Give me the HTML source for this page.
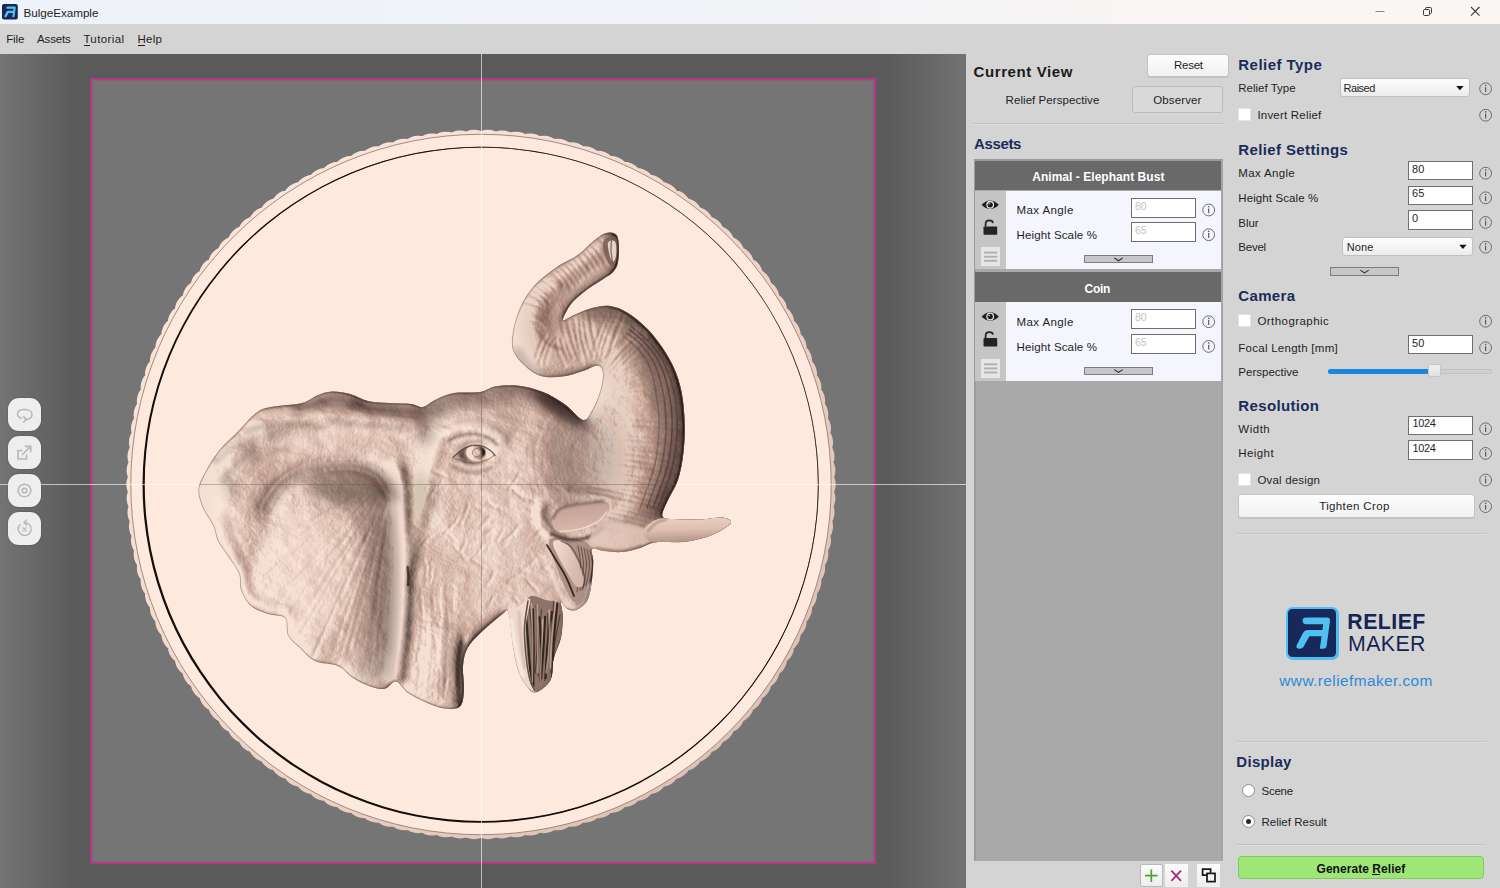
<!DOCTYPE html>
<html lang="en"><head><meta charset="utf-8"><title>BulgeExample</title>
<style>
html,body{margin:0;padding:0;background:#d4d4d4;}
#app{position:relative;width:1500px;height:888px;overflow:hidden;background:#d4d4d4;font-family:"Liberation Sans",sans-serif;}
.t{position:absolute;white-space:pre;line-height:1;color:#1f1f1f;}
.b{position:absolute;box-sizing:border-box;}
u{text-decoration:underline;text-decoration-thickness:1px;text-underline-offset:1.5px;}
svg{position:absolute;overflow:visible;}
#titlebar{left:0;top:0;width:1500px;height:24px;background:linear-gradient(90deg,#eef2f9 0%,#f1f3f8 45%,#f8f5f4 75%,#faf6f3 100%);}
#viewport{left:0;top:54px;width:966px;height:834px;overflow:hidden;background:linear-gradient(90deg,#747474 0px,#5a5a5a 76px,#5a5a5a 886px,#727272 966px);}
#frame{left:90px;top:24px;width:786px;height:786px;background:#757575;border:2px solid #b03a86;box-shadow:inset 0 0 0 1px rgba(176,58,134,.3);}
.vbtn{left:8px;width:33px;height:33px;border-radius:11px;background:#efeeef;box-shadow:0 0 2px rgba(0,0,0,.25);}
.btn{border:1px solid #c3c3c3;border-radius:3px;background:linear-gradient(#fdfdfd,#f1f1f1);box-shadow:0 1px 0 rgba(0,0,0,.08);}
.btn2{border:1px solid #bcbcbc;border-radius:3px;background:#d9d9d9;}
.sep{height:1px;background:#c3c3c3;box-shadow:0 1px 0 #dcdcdc;}
.inp{background:#fff;border:1px solid #6f6f6f;}
.combo{border:1px solid #c0c0c0;border-radius:3px;background:linear-gradient(#fefefe,#ececec);}
.chk{width:13px;height:13px;background:#fff;border:1px solid #e3e3e3;}
.exp{background:#c7c7c7;border:1px solid #7d7d7d;}
.ahead{left:975px;width:246.2px;height:29.7px;background:#696969;}
.abody{left:975px;width:246.2px;height:78.8px;background:#f5f5fd;}
.acol{left:975px;width:30.7px;height:78.8px;background:#c5c5c5;}
.hamb{left:981.3px;width:18.6px;height:18.6px;background:#e6e6e6;}
.radio{width:13px;height:13px;border-radius:50%;background:#fff;border:1px solid #8d8d8d;}
.sbtn{width:23px;height:23px;background:linear-gradient(#fbfbfb,#ededed);}

</style></head>
<body>
<div id="app">
<div class="b" id="viewport">
 <div class="b" id="frame"></div>
 <svg width="966" height="834" viewBox="0 54 966 834" style="left:0;top:0">
<defs>
<path id="esil" d="M256.0 413.0C261.5 408.9 263.3 408.7 271.0 407.0C278.7 405.3 294.3 404.9 302.0 403.0C309.7 401.1 312.0 397.4 317.0 395.5C322.0 393.6 326.5 391.9 332.0 391.6C337.5 391.4 344.0 392.4 350.0 394.0C356.0 395.6 361.3 399.5 368.0 401.0C374.7 402.5 382.8 402.5 390.0 403.0C397.2 403.5 405.5 403.3 411.0 404.0C416.5 404.7 419.0 407.7 423.0 407.0C427.0 406.3 429.8 402.3 435.0 400.0C440.2 397.7 446.5 394.3 454.0 393.0C461.5 391.7 473.2 393.1 480.0 392.0C486.8 390.9 488.5 387.6 495.0 386.5C501.5 385.4 511.0 384.8 519.0 385.7C527.0 386.6 535.3 388.9 543.0 392.0C550.7 395.1 558.3 399.8 565.0 404.5C571.7 409.2 578.5 419.0 583.0 420.0C587.5 421.0 589.2 415.3 592.0 410.6C594.8 405.9 598.2 398.1 600.0 392.0C601.8 385.9 603.3 378.4 603.0 374.0C602.7 369.6 601.3 366.0 598.0 365.5C594.7 365.0 589.0 369.1 583.0 371.0C577.0 372.9 569.2 375.8 562.0 376.6C554.8 377.4 546.3 377.6 540.0 375.7C533.7 373.8 528.5 369.3 524.0 365.0C519.5 360.7 514.8 355.6 513.0 350.0C511.2 344.4 511.8 338.8 513.0 331.6C514.2 324.4 517.0 314.6 520.5 307.0C524.0 299.4 528.2 292.5 534.0 286.0C539.8 279.5 548.3 273.1 555.5 268.0C562.7 262.9 571.2 259.6 577.0 255.6C582.8 251.6 586.5 247.0 590.0 244.0C593.5 241.0 595.6 239.2 598.0 237.5C600.4 235.8 602.3 234.4 604.5 233.6C606.7 232.8 609.0 232.4 611.0 232.6C613.0 232.8 615.2 233.4 616.5 235.0C617.8 236.6 618.2 238.7 618.6 242.0C619.0 245.3 619.1 251.0 618.8 255.0C618.5 259.0 618.2 262.9 617.0 266.0C615.8 269.1 613.7 271.4 611.5 273.5C609.3 275.6 608.2 275.7 604.0 278.5C599.8 281.3 591.5 286.2 586.0 290.5C580.5 294.8 574.8 299.1 571.0 304.0C567.2 308.9 562.5 318.2 563.0 320.0C563.5 321.8 569.2 317.0 574.0 315.0C578.8 313.0 586.0 309.5 592.0 308.0C598.0 306.5 604.0 305.2 610.0 306.0C616.0 306.8 621.8 309.2 628.0 313.0C634.2 316.8 641.3 322.8 647.0 328.5C652.7 334.2 657.5 340.4 662.0 347.0C666.5 353.6 670.7 360.5 674.0 368.0C677.3 375.5 679.8 382.8 681.6 392.0C683.4 401.2 684.4 412.8 684.7 423.0C685.0 433.2 684.5 443.5 683.4 453.0C682.3 462.5 680.6 472.2 678.0 480.0C675.4 487.8 670.6 493.9 668.0 500.0C665.4 506.1 661.0 513.3 662.5 516.5C664.0 519.7 670.6 518.7 677.0 519.2C683.4 519.7 693.5 519.7 701.0 519.4C708.5 519.1 717.0 517.1 722.0 517.5C727.0 517.9 730.5 519.8 731.0 521.5C731.5 523.2 729.0 525.4 725.0 528.0C721.0 530.6 714.0 534.7 707.0 537.0C700.0 539.3 691.7 541.1 683.0 542.0C674.3 542.9 662.2 541.5 655.0 542.5C647.8 543.5 645.5 546.4 640.0 548.0C634.5 549.6 628.0 551.5 622.0 552.0C616.0 552.5 609.0 551.5 604.0 551.0C599.0 550.5 593.8 547.2 592.0 549.0C590.2 550.8 593.4 555.9 593.3 561.6C593.2 567.3 592.6 576.4 591.6 583.0C590.6 589.6 589.6 596.5 587.0 601.0C584.4 605.5 579.3 608.7 576.0 610.0C572.7 611.3 569.5 610.0 567.0 608.7C564.5 607.4 561.7 600.8 561.0 602.0C560.3 603.2 562.7 610.1 562.7 616.0C562.7 621.9 562.5 630.4 561.0 637.6C559.5 644.8 555.4 651.9 553.6 659.0C551.9 666.1 553.5 674.4 550.5 680.0C547.5 685.6 539.8 691.8 535.5 692.5C531.2 693.2 528.0 687.9 525.0 684.0C522.0 680.1 519.5 675.2 517.5 669.0C515.5 662.8 514.5 656.0 513.0 646.7C511.5 637.4 510.3 618.4 508.5 613.0C506.7 607.6 506.6 611.2 502.0 614.5C497.4 617.8 486.8 626.9 481.0 632.5C475.2 638.1 470.5 642.4 467.5 648.0C464.5 653.6 463.6 659.0 463.0 666.0C462.4 673.0 464.5 683.2 464.0 690.0C463.5 696.8 463.2 703.4 460.0 706.5C456.8 709.6 450.2 709.1 444.5 708.4C438.8 707.7 432.1 705.0 426.0 702.4C419.9 699.8 413.0 696.5 408.0 693.0C403.0 689.5 399.8 682.2 396.0 681.5C392.2 680.8 389.1 687.8 385.0 688.7C380.9 689.6 376.9 688.8 371.6 687.0C366.3 685.2 358.6 681.5 353.0 678.0C347.4 674.5 344.3 668.8 338.0 666.0C331.7 663.2 321.3 664.0 315.0 661.0C308.7 658.0 304.5 652.2 300.0 648.0C295.5 643.8 290.5 640.5 288.0 635.5C285.5 630.5 288.3 621.6 285.0 618.0C281.7 614.4 273.7 616.0 268.0 614.0C262.3 612.0 255.5 610.0 251.0 606.0C246.5 602.0 242.9 595.2 241.0 590.0C239.1 584.8 241.1 579.6 239.3 574.5C237.5 569.4 233.8 564.9 230.2 559.3C226.6 553.7 220.8 546.5 218.0 541.0C215.2 535.5 215.9 531.5 213.4 526.0C210.9 520.5 205.3 513.8 202.8 507.7C200.3 501.6 197.9 495.5 198.4 489.4C198.9 483.3 202.3 477.8 205.8 471.2C209.3 464.6 214.2 456.6 219.5 450.0C224.8 443.4 231.7 437.9 237.8 431.7C243.9 425.5 250.5 417.1 256.0 413.0Z"/>
<clipPath id="eclip"><use href="#esil"/></clipPath>
<linearGradient id="bandg" x1="0.15" y1="0.15" x2="0.85" y2="0.85"><stop offset="0" stop-color="#fae4d8"/><stop offset=".5" stop-color="#f0d6c9"/><stop offset="1" stop-color="#dfc2b5"/></linearGradient>
</defs>
<circle cx="481" cy="484.5" r="335.7" fill="none" stroke="url(#bandg)" stroke-width="38" stroke-linecap="round" pathLength="150" stroke-dasharray="0 1"/>
<circle cx="481" cy="484.5" r="352.2" fill="url(#bandg)"/>
<circle cx="481" cy="484.5" r="350.2" fill="#fde9de" stroke="#8d7468" stroke-opacity=".8" stroke-width="1"/>
<circle cx="481" cy="484.5" r="337.3" fill="none" stroke="#7d675e" stroke-width=".9"/>
<path d="M142.55 484.82A338.0 338.0 0 1 1 818.55 484.82A338.0 338.0 0 1 1 142.55 484.82ZM144.72 484.28A336.6 336.6 0 1 0 817.92 484.28A336.6 336.6 0 1 0 144.72 484.28Z" fill="#120e0c"/>
<path d="M481.5 54V888M0 484.5H966" fill="none" stroke="#fff" stroke-opacity=".62" stroke-width="1"/>
<defs>
<filter id="bl0_7" x="150" y="200" width="620" height="540" filterUnits="userSpaceOnUse"><feGaussianBlur stdDeviation="0.7"/></filter>
<filter id="bl1_2" x="150" y="200" width="620" height="540" filterUnits="userSpaceOnUse"><feGaussianBlur stdDeviation="1.2"/></filter>
<filter id="bl2" x="150" y="200" width="620" height="540" filterUnits="userSpaceOnUse"><feGaussianBlur stdDeviation="2"/></filter>
<filter id="bl3" x="150" y="200" width="620" height="540" filterUnits="userSpaceOnUse"><feGaussianBlur stdDeviation="3"/></filter>
<filter id="bl4" x="150" y="200" width="620" height="540" filterUnits="userSpaceOnUse"><feGaussianBlur stdDeviation="4"/></filter>
<filter id="bl6" x="150" y="200" width="620" height="540" filterUnits="userSpaceOnUse"><feGaussianBlur stdDeviation="6"/></filter>
<filter id="bl9" x="150" y="200" width="620" height="540" filterUnits="userSpaceOnUse"><feGaussianBlur stdDeviation="9"/></filter>
<filter id="bl13" x="150" y="200" width="620" height="540" filterUnits="userSpaceOnUse"><feGaussianBlur stdDeviation="13"/></filter>
<filter id="relief" x="150" y="200" width="620" height="540" filterUnits="userSpaceOnUse" color-interpolation-filters="sRGB">
 <feColorMatrix in="SourceGraphic" type="matrix" values="0 0 0 0 0  0 0 0 0 0  0 0 0 0 0  1 0 0 0 0" result="h0"/>
 <feGaussianBlur in="h0" stdDeviation="0.9" result="h"/>
 <feTurbulence type="fractalNoise" baseFrequency="0.075 0.11" numOctaves="4" seed="11" result="nz"/>
 <feColorMatrix in="nz" type="matrix" values="0 0 0 0 0  0 0 0 0 0  0 0 0 0 0  1 0 0 0 -0.3" result="nza"/>
 <feComposite in="h" in2="nza" operator="arithmetic" k1="0.06" k2="1" k3="0" k4="0" result="hn1"/>
 <feTurbulence type="fractalNoise" baseFrequency="0.016 0.02" numOctaves="3" seed="3" result="nzc"/>
 <feColorMatrix in="nzc" type="matrix" values="0 0 0 0 0  0 0 0 0 0  0 0 0 0 0  1.6 0 0 0 -0.35" result="nzca"/>
 <feComposite in="hn1" in2="nzca" operator="arithmetic" k1="0.13" k2="1" k3="0" k4="0" result="hn"/>
 <feDiffuseLighting in="hn" surfaceScale="17" diffuseConstant="1.15" lighting-color="#ffffff" result="lit0">
  <feDistantLight azimuth="170" elevation="50"/>
 </feDiffuseLighting>
 <feComponentTransfer in="lit0" result="lit">
  <feFuncR type="table" tableValues="0.16 0.34 0.52 0.68 0.81 0.96"/>
  <feFuncG type="table" tableValues="0.11 0.27 0.43 0.57 0.685 0.88"/>
  <feFuncB type="table" tableValues="0.10 0.25 0.39 0.52 0.63 0.83"/>
 </feComponentTransfer>
</filter>
</defs>
<g clip-path="url(#eclip)"><g filter="url(#relief)">
<rect x="150" y="200" width="620" height="540" fill="#000"/>
<use href="#esil" fill="#2e2e2e"/>
<use href="#esil" fill="#828282" fill-opacity=".6" filter="url(#bl4)"/>
<use href="#esil" fill="#aaaaaa" fill-opacity=".45" filter="url(#bl13)"/>
<path d="M620.0 532.0C621.7 525.3 627.2 505.3 630.0 492.0C632.8 478.7 635.3 464.7 637.0 452.0C638.7 439.3 640.0 427.0 640.0 416.0C640.0 405.0 639.2 395.3 637.0 386.0C634.8 376.7 631.5 367.2 627.0 360.0C622.5 352.8 616.2 347.0 610.0 343.0C603.8 339.0 593.3 337.2 590.0 336.0" fill="none" stroke="#ebebeb" stroke-opacity="0.4" stroke-width="36" stroke-linecap="round" stroke-linejoin="round" filter="url(#bl13)" />
<path d="M614.0 343.0C610.7 341.8 600.8 336.5 594.0 336.0C587.2 335.5 579.8 338.3 573.0 340.0C566.2 341.7 558.7 346.0 553.0 346.0C547.3 346.0 542.3 344.0 539.0 340.0C535.7 336.0 534.0 325.0 533.0 322.0" fill="none" stroke="#e6e6e6" stroke-opacity="0.5" stroke-width="22" stroke-linecap="round" stroke-linejoin="round" filter="url(#bl9)" />
<path d="M539.0 340.0C538.0 337.0 532.8 328.3 533.0 322.0C533.2 315.7 536.3 308.3 540.0 302.0C543.7 295.7 549.3 289.7 555.0 284.0C560.7 278.3 567.8 273.0 574.0 268.0C580.2 263.0 586.5 258.3 592.0 254.0C597.5 249.7 604.5 244.0 607.0 242.0" fill="none" stroke="#e1e1e1" stroke-opacity="0.5" stroke-width="13" stroke-linecap="round" stroke-linejoin="round" filter="url(#bl6)" />
<ellipse cx="495" cy="480" rx="78" ry="66" fill="#d7d7d7" fill-opacity="0.45" filter="url(#bl13)"/>
<ellipse cx="470" cy="425" rx="42" ry="15" fill="#e1e1e1" fill-opacity="0.35" filter="url(#bl9)" transform="rotate(-6 470 425)"/>
<path d="M447.0 434.0C449.2 433.0 454.8 429.0 460.0 428.0C465.2 427.0 472.0 427.0 478.0 428.0C484.0 429.0 491.7 431.8 496.0 434.0C500.3 436.2 502.7 439.8 504.0 441.0" fill="none" stroke="#ebebeb" stroke-opacity="0.55" stroke-width="6" stroke-linecap="round" stroke-linejoin="round" filter="url(#bl3)" />
<path d="M441.0 434.0C439.8 437.7 436.5 446.7 434.0 456.0C431.5 465.3 429.0 477.7 426.0 490.0C423.0 502.3 418.7 518.0 416.0 530.0C413.3 542.0 411.0 556.7 410.0 562.0" fill="none" stroke="#ebebeb" stroke-opacity="0.3" stroke-width="9" stroke-linecap="round" stroke-linejoin="round" filter="url(#bl4)" />
<ellipse cx="476" cy="453" rx="15" ry="9" fill="#464646" fill-opacity="0.55" filter="url(#bl3)" transform="rotate(-4 476 453)"/>
<ellipse cx="476.5" cy="452.3" rx="7.5" ry="6.5" fill="#d7d7d7" fill-opacity="0.45" filter="url(#bl1_2)"/>
<ellipse cx="585" cy="458" rx="30" ry="44" fill="#505050" fill-opacity="0.4" filter="url(#bl13)"/>
<path d="M541.0 503.0C540.8 505.5 539.0 513.3 540.0 518.0C541.0 522.7 543.5 527.2 547.0 531.0C550.5 534.8 558.7 539.3 561.0 541.0" fill="none" stroke="#ebebeb" stroke-opacity="0.4" stroke-width="8" stroke-linecap="round" stroke-linejoin="round" filter="url(#bl3)" />
<path d="M546.0 498.0C549.3 497.3 558.7 494.3 566.0 494.0C573.3 493.7 582.3 495.0 590.0 496.0C597.7 497.0 608.3 499.3 612.0 500.0" fill="none" stroke="#ebebeb" stroke-opacity="0.4" stroke-width="8" stroke-linecap="round" stroke-linejoin="round" filter="url(#bl4)" />
<path d="M398.0 468.0C399.0 476.7 402.9 502.2 404.0 520.0C405.1 537.8 404.8 556.7 404.5 575.0C404.2 593.3 403.4 612.7 402.0 630.0C400.6 647.3 397.0 670.8 396.0 679.0" fill="none" stroke="#ebebeb" stroke-opacity="0.55" stroke-width="10" stroke-linecap="round" stroke-linejoin="round" filter="url(#bl4)" />
<path d="M264.0 512.0C266.8 507.7 273.7 493.0 281.0 486.0C288.3 479.0 297.0 473.7 308.0 470.0C319.0 466.3 335.5 463.7 347.0 464.0C358.5 464.3 369.3 467.0 377.0 472.0C384.7 477.0 390.3 490.3 393.0 494.0" fill="none" stroke="#1e1e1e" stroke-opacity="0.42" stroke-width="10" stroke-linecap="round" stroke-linejoin="round" filter="url(#bl6)" />
<ellipse cx="322" cy="575" rx="52" ry="84" fill="#e1e1e1" fill-opacity="0.42" filter="url(#bl13)" transform="rotate(4 322 575)"/>
<path d="M262.0 428.0C268.3 426.3 287.0 420.0 300.0 418.0C313.0 416.0 325.8 415.7 340.0 416.0C354.2 416.3 372.0 418.0 385.0 420.0C398.0 422.0 412.5 426.7 418.0 428.0" fill="none" stroke="#e1e1e1" stroke-opacity="0.45" stroke-width="14" stroke-linecap="round" stroke-linejoin="round" filter="url(#bl6)" />
<path d="M300.0 407.0C303.0 405.8 312.3 401.8 318.0 400.0C323.7 398.2 328.3 396.3 334.0 396.0C339.7 395.7 346.0 396.5 352.0 398.0C358.0 399.5 362.8 403.5 370.0 405.0C377.2 406.5 386.5 406.2 395.0 407.0C403.5 407.8 416.7 409.5 421.0 410.0" fill="none" stroke="#323232" stroke-opacity="0.35" stroke-width="6" stroke-linecap="round" stroke-linejoin="round" filter="url(#bl3)" />
<ellipse cx="240" cy="500" rx="22" ry="60" fill="#d7d7d7" fill-opacity="0.3" filter="url(#bl9)"/>
<path d="M215.0 520.0C216.8 524.7 221.8 538.8 226.0 548.0C230.2 557.2 236.3 566.7 240.0 575.0C243.7 583.3 243.3 592.7 248.0 598.0C252.7 603.3 261.0 604.7 268.0 607.0C275.0 609.3 286.3 611.2 290.0 612.0" fill="none" stroke="#d7d7d7" stroke-opacity="0.35" stroke-width="10" stroke-linecap="round" stroke-linejoin="round" filter="url(#bl4)" />
<ellipse cx="440" cy="655" rx="18" ry="34" fill="#d7d7d7" fill-opacity="0.4" filter="url(#bl9)" transform="rotate(8 440 655)"/>
<path d="M464.0 640.0C463.5 644.7 461.3 657.3 461.0 668.0C460.7 678.7 461.8 698.0 462.0 704.0" fill="none" stroke="#282828" stroke-opacity="0.45" stroke-width="7" stroke-linecap="round" stroke-linejoin="round" filter="url(#bl3)" />
<path d="M664.0 542.6Q625.3 528.9 587.4 523.4M668.7 532.7Q626.8 518.3 591.0 513.2M665.5 526.2Q627.8 514.7 593.5 508.2M669.8 522.5Q629.3 508.7 602.2 505.6M661.7 515.8Q630.4 505.4 589.7 497.7M667.7 510.5Q632.5 498.5 589.6 491.0M673.9 507.1Q633.3 493.1 589.8 486.1M669.3 497.4Q634.6 488.6 608.5 486.7M672.8 493.3Q635.5 483.1 604.1 481.3M678.1 489.9Q635.7 478.5 609.2 477.9M670.8 482.2Q637.2 473.5 596.0 469.1M686.3 476.0Q639.7 464.2 610.0 462.6M677.9 469.3Q639.2 458.9 602.6 456.1M685.9 464.9Q640.1 452.9 613.4 452.2M689.1 455.7Q641.4 447.9 608.1 449.0M679.1 450.8Q641.9 445.4 614.5 445.4M677.1 444.2Q642.0 438.2 595.7 437.5M687.5 441.1Q641.8 434.4 606.9 434.3M689.3 430.3Q644.2 423.0 616.2 424.2M679.4 423.8Q644.3 418.5 610.5 418.0M690.9 411.3Q643.5 412.0 602.1 420.2M682.2 406.9Q642.7 408.0 613.0 413.8M687.5 400.9Q642.4 402.4 606.9 408.9M684.6 397.3Q642.7 398.7 603.2 405.4M681.7 391.7Q642.1 392.9 605.4 399.3M682.1 387.3Q642.0 388.7 607.2 394.7M669.4 375.1Q640.4 383.6 611.6 397.4M673.9 368.8Q638.6 379.5 606.5 394.8M668.3 366.4Q636.6 374.6 605.0 390.8M668.0 360.9Q635.4 369.5 618.7 379.9M666.9 356.4Q633.2 365.6 616.4 375.9M662.5 352.0Q630.7 360.6 610.4 372.1M653.0 337.2Q628.0 357.6 614.7 375.5M645.1 337.9Q625.4 354.2 612.8 370.2M644.6 332.6Q623.1 350.7 608.8 368.5M639.2 330.4Q618.0 346.5 607.2 362.4M635.1 330.0Q615.9 344.7 603.5 361.6M624.0 315.0Q612.0 342.3 607.2 362.9M618.3 311.9Q604.6 339.4 601.3 360.3M612.6 314.3Q600.2 338.1 598.0 355.9M607.3 316.0Q596.0 336.6 592.7 357.8M589.5 308.3Q592.2 336.5 598.7 356.5M583.9 314.0Q585.6 338.0 591.4 353.3M580.2 318.0Q580.1 338.3 587.7 357.4M574.5 318.4Q575.9 339.4 583.3 364.6M566.5 316.5Q571.3 340.3 580.0 361.7M561.6 320.3Q565.0 342.2 573.0 358.1M561.9 337.9Q560.9 344.5 567.8 357.5M556.4 338.3Q555.3 345.6 564.9 366.5M555.1 339.6Q549.1 344.2 545.4 362.3M551.1 337.3Q545.4 343.3 539.1 365.2M546.2 334.8Q540.6 340.3 536.3 358.1M545.1 338.4Q538.3 336.8 526.8 344.5M544.0 328.1Q535.9 328.6 515.7 337.5M540.4 324.2Q534.4 323.5 517.4 331.9M539.4 324.3Q533.1 319.8 520.0 317.5M543.2 309.0Q538.9 304.5 520.6 301.1M543.5 305.6Q541.6 299.6 529.0 293.5M548.8 302.8Q544.7 296.1 531.5 288.4M550.9 298.1Q548.1 292.2 537.7 287.0M554.3 296.3Q549.8 289.7 540.1 284.4M556.1 292.0Q553.5 285.2 540.5 279.0M563.4 285.6Q561.3 279.6 549.7 269.4M571.2 288.0Q564.2 275.6 552.8 266.1M576.5 286.0Q568.7 273.2 558.8 265.0M580.1 282.9Q572.7 269.4 560.0 259.0M582.6 278.9Q575.2 266.0 567.3 259.3M587.6 276.9Q580.0 263.9 569.3 253.3M591.3 271.9Q584.2 259.1 574.8 250.6M595.7 268.2Q588.9 255.7 577.7 245.0M599.6 265.1Q593.6 252.8 584.7 246.5M605.9 264.4Q598.3 249.6 587.2 241.1M610.7 254.5Q605.4 242.4 594.6 234.4" fill="none" stroke="#282828" stroke-opacity=".05" stroke-width="2.2" stroke-linecap="round"/>
<path d="M357.8 535.9Q324.9 593.3 290.1 651.8M368.3 532.1Q341.8 595.9 313.3 656.1M370.3 534.1Q358.2 576.4 338.3 614.9M384.8 505.2Q373.7 546.3 361.4 584.2M373.8 542.7Q357.3 599.7 339.1 660.2M375.3 547.0Q360.8 597.6 348.1 653.0M385.9 534.4Q375.4 593.9 369.3 658.7M384.9 551.7Q377.3 581.5 377.3 615.9M387.6 551.5Q387.1 591.5 381.1 629.7" fill="none" stroke="#323232" stroke-opacity="0.02" stroke-width="2.4" stroke-linecap="round"/>
<path d="M359.5 494.2Q335.8 510.5 313.6 521.1M350.5 499.5Q283.0 534.1 223.3 574.0M330.6 517.1Q307.6 528.7 288.8 545.6M350.0 508.1Q327.3 522.2 307.5 541.1M343.5 516.1Q287.8 560.8 235.2 606.2M371.0 496.8Q339.7 527.0 307.1 560.2M342.5 528.0Q305.3 569.5 264.0 610.2M371.3 503.0Q350.3 530.2 326.5 560.1M364.5 514.8Q338.9 545.5 315.9 582.1M370.3 511.7Q332.4 571.0 295.2 631.1M377.7 498.8Q348.5 545.2 319.6 587.0" fill="none" stroke="#323232" stroke-opacity="0.009" stroke-width="2.4" stroke-linecap="round"/>
<path d="M363.8 538.5Q339.7 580.2 323.0 625.9M382.8 500.2Q364.1 543.7 344.0 591.0M369.2 533.0Q347.2 588.0 324.6 639.4M380.0 515.7Q355.4 584.5 334.5 650.8M375.3 546.2Q370.3 580.4 357.7 614.1M381.9 529.5Q368.1 590.5 356.4 646.8M383.4 544.4Q375.0 611.7 363.0 680.1M388.4 533.1Q382.8 565.7 382.3 597.1M391.1 513.8Q389.5 572.6 382.5 631.7" fill="none" stroke="#323232" stroke-opacity="0.013" stroke-width="1.8" stroke-linecap="round"/>
<path d="M355.6 495.9Q313.0 520.6 273.8 542.6M351.6 499.2Q330.6 514.9 308.9 524.6M368.7 492.2Q338.9 512.0 310.5 534.1M334.3 520.9Q294.7 552.4 249.5 587.4M363.5 499.4Q340.1 515.2 319.6 536.0M349.8 520.9Q330.3 537.9 315.5 557.4M346.8 526.3Q312.3 569.9 270.5 610.8M353.2 528.0Q318.2 566.6 290.8 610.6M351.7 531.0Q312.3 579.9 279.4 628.4M357.3 531.1Q318.7 594.2 279.7 651.6M374.7 508.2Q354.2 540.8 338.4 572.7" fill="none" stroke="#323232" stroke-opacity="0.006" stroke-width="1.8" stroke-linecap="round"/>
<path d="M367.6 533.8Q337.1 599.4 311.3 661.4M377.2 515.2Q366.7 536.7 359.2 559.5M374.9 529.7Q356.2 583.4 337.2 639.7M377.3 539.1Q366.7 597.3 348.7 650.8M387.7 501.4Q375.6 544.3 368.6 585.3M387.2 517.4Q382.6 555.9 376.0 589.6M387.4 529.1Q377.5 597.3 370.8 668.1M388.6 537.7Q380.0 598.1 378.4 658.8M394.7 512.1Q391.9 540.7 395.7 573.5" fill="none" stroke="#323232" stroke-opacity="0.028" stroke-width="1.5" stroke-linecap="round"/>
<path d="M362.1 491.7Q332.7 511.3 300.6 525.7M355.3 499.2Q328.9 516.6 309.3 529.1M370.6 492.7Q310.5 538.5 255.5 584.2M352.2 511.4Q316.9 542.6 280.6 575.4M340.8 520.4Q308.5 543.5 282.1 571.6M371.1 497.9Q338.7 531.6 309.4 562.3M365.8 505.0Q321.0 550.9 278.1 601.3M366.4 511.5Q329.9 566.6 286.2 620.4M358.2 528.1Q336.4 568.2 307.5 604.7M376.1 502.2Q340.4 554.5 306.0 612.2M362.3 533.1Q344.5 562.6 329.1 595.1" fill="none" stroke="#323232" stroke-opacity="0.013" stroke-width="1.5" stroke-linecap="round"/>
<path d="M513.1 488.0Q518.1 495.9 526.3 500.2M435.0 489.1Q431.5 492.9 430.1 498.3M541.9 522.9Q544.9 526.3 548.3 530.1M526.3 578.4Q529.8 584.6 536.1 589.6M420.1 647.3Q419.3 656.4 415.3 665.1M439.8 669.0Q441.4 678.5 438.4 687.7M424.2 558.7Q427.2 569.7 427.3 580.2M440.0 685.5Q441.1 692.5 439.6 699.5M557.1 524.1Q560.1 526.1 563.8 528.6M414.2 525.3Q418.2 528.7 421.4 530.1M494.2 572.1Q492.0 578.8 486.3 585.0M543.0 566.6Q547.5 570.6 551.7 573.4M416.4 651.3Q418.3 657.4 418.6 663.9M551.8 484.6Q556.9 487.0 561.9 490.7M520.3 494.6Q529.3 497.9 536.3 502.1M441.4 611.7Q441.2 619.1 439.5 626.5M416.4 652.0Q417.0 656.7 418.5 661.7M447.4 533.2Q452.5 537.3 455.6 541.9M466.8 671.4Q465.0 678.4 466.4 685.6M432.0 471.5Q438.6 472.0 445.8 476.6M549.2 563.2Q546.1 567.2 543.0 569.5M483.0 545.5Q481.4 548.9 478.0 553.5M519.2 525.5Q512.6 534.9 504.1 541.3M577.0 484.7Q573.4 487.1 569.9 490.8M471.8 559.6Q479.2 563.8 485.1 568.4M427.7 485.0Q425.9 489.8 422.6 495.5M544.6 526.6Q540.4 529.8 537.3 533.9M513.2 597.1Q516.8 600.6 518.7 603.1M420.0 596.6Q421.2 605.6 423.6 614.3M451.8 683.9Q452.2 688.1 453.6 692.6M427.2 565.7Q425.0 576.1 425.6 586.1M434.7 637.5Q437.3 643.7 436.3 649.6M487.7 502.5Q494.8 507.7 500.6 509.0M519.7 567.8Q523.8 571.1 527.8 573.6M494.5 594.7Q491.0 600.9 487.6 609.0M458.4 517.8Q452.7 526.7 445.2 532.5M451.7 544.5Q460.9 553.4 466.4 560.0M519.3 474.1Q515.1 481.8 508.8 488.9M425.5 624.8Q428.6 634.8 426.4 645.0M447.2 676.8Q445.6 687.4 444.1 697.1M491.5 515.7Q485.1 522.6 480.0 528.3M475.6 507.0Q479.0 509.2 483.7 511.2M493.0 530.4Q488.9 531.5 485.7 534.8M436.8 615.7Q436.5 621.1 438.6 626.2M432.2 535.4Q425.9 540.2 422.0 545.4M503.5 529.5Q499.3 536.2 496.6 541.2M524.8 568.2Q517.8 576.8 507.8 582.1M430.9 562.7Q432.3 572.6 429.6 582.7M432.0 597.0Q434.6 603.6 433.7 609.9M435.1 637.6Q435.1 645.8 436.5 653.9M465.5 541.3Q463.4 546.3 460.4 552.3M468.1 504.9Q465.4 514.0 460.4 524.7M535.0 559.7Q527.3 567.6 519.8 573.9" fill="none" stroke="#282828" stroke-opacity=".045" stroke-width="1.8" stroke-linecap="round"/>
<path d="M425.0 585.0C424.9 594.2 425.3 621.7 424.5 640.0C423.7 658.3 420.8 685.8 420.0 695.0" fill="none" stroke="#282828" stroke-opacity="0.09" stroke-width="5" stroke-linecap="round" stroke-linejoin="round" filter="url(#bl2)" />
<path d="M436.0 585.0C435.9 594.2 436.3 621.7 435.5 640.0C434.7 658.3 431.8 685.8 431.0 695.0" fill="none" stroke="#282828" stroke-opacity="0.09" stroke-width="5" stroke-linecap="round" stroke-linejoin="round" filter="url(#bl2)" />
<path d="M450.0 585.0C450.1 594.2 451.0 621.7 450.5 640.0C450.0 658.3 447.6 685.8 447.0 695.0" fill="none" stroke="#282828" stroke-opacity="0.09" stroke-width="5" stroke-linecap="round" stroke-linejoin="round" filter="url(#bl2)" />
</g>
<path d="M424.0 411.0C428.7 409.5 442.3 404.0 452.0 402.0C461.7 400.0 474.0 400.3 482.0 399.0C490.0 397.7 493.3 395.0 500.0 394.0C506.7 393.0 514.5 392.0 522.0 393.0C529.5 394.0 537.7 396.8 545.0 400.0C552.3 403.2 559.5 407.7 566.0 412.0C572.5 416.3 581.0 423.7 584.0 426.0" fill="none" stroke="#2e1f1b" stroke-opacity="0.36" stroke-width="17" stroke-linecap="round" stroke-linejoin="round" filter="url(#bl4)" />
<ellipse cx="561" cy="408" rx="27" ry="10" fill="#2e1f1b" fill-opacity="0.576" filter="url(#bl4)" transform="rotate(35 561 408)"/>
<ellipse cx="548" cy="401" rx="20" ry="6" fill="#2e1f1b" fill-opacity="0.36" filter="url(#bl3)" transform="rotate(22 548 401)"/>
<ellipse cx="433" cy="414" rx="16" ry="8" fill="#2e1f1b" fill-opacity="0.252" filter="url(#bl4)" transform="rotate(-10 433 414)"/>
<path d="M298.0 409.0C301.3 407.8 312.0 403.8 318.0 402.0C324.0 400.2 328.3 398.3 334.0 398.0C339.7 397.7 346.0 398.5 352.0 400.0C358.0 401.5 362.8 405.5 370.0 407.0C377.2 408.5 386.5 408.2 395.0 409.0C403.5 409.8 416.7 411.5 421.0 412.0" fill="none" stroke="#2e1f1b" stroke-opacity="0.36" stroke-width="11" stroke-linecap="round" stroke-linejoin="round" filter="url(#bl3)" />
<ellipse cx="356" cy="405" rx="9" ry="5" fill="#2e1f1b" fill-opacity="0.36" filter="url(#bl2)"/>
<ellipse cx="322" cy="401" rx="8" ry="4" fill="#2e1f1b" fill-opacity="0.252" filter="url(#bl2)"/>
<path d="M266.0 509.0C268.7 505.2 275.0 492.3 282.0 486.0C289.0 479.7 297.2 474.3 308.0 471.0C318.8 467.7 335.7 465.5 347.0 466.0C358.3 466.5 368.5 469.2 376.0 474.0C383.5 478.8 389.3 491.5 392.0 495.0" fill="none" stroke="#2e1f1b" stroke-opacity="0.36" stroke-width="9" stroke-linecap="round" stroke-linejoin="round" filter="url(#bl4)" />
<ellipse cx="350" cy="488" rx="42" ry="17" fill="#2e1f1b" fill-opacity="0.403" filter="url(#bl6)" transform="rotate(3 350 488)"/>
<path d="M379.0 500.0C379.5 510.0 381.7 540.0 382.0 560.0C382.3 580.0 381.8 602.0 381.0 620.0C380.2 638.0 377.7 660.0 377.0 668.0" fill="none" stroke="#2e1f1b" stroke-opacity="0.36" stroke-width="30" stroke-linecap="round" stroke-linejoin="round" filter="url(#bl9)" />
<path d="M386.0 520.0C386.3 530.0 388.2 558.3 388.0 580.0C387.8 601.7 385.5 638.3 385.0 650.0" fill="none" stroke="#2e1f1b" stroke-opacity="0.216" stroke-width="9" stroke-linecap="round" stroke-linejoin="round" filter="url(#bl4)" />
<ellipse cx="249" cy="453" rx="14" ry="8" fill="#2e1f1b" fill-opacity="0.216" filter="url(#bl4)" transform="rotate(-40 249 453)"/>
<ellipse cx="231" cy="486" rx="7" ry="14" fill="#2e1f1b" fill-opacity="0.18" filter="url(#bl4)"/>
<ellipse cx="276" cy="433" rx="12" ry="6" fill="#2e1f1b" fill-opacity="0.18" filter="url(#bl3)" transform="rotate(-15 276 433)"/>
<ellipse cx="312" cy="578" rx="36" ry="62" fill="#ffe9dd" fill-opacity="0.432" filter="url(#bl13)"/>
<ellipse cx="300" cy="545" rx="24" ry="26" fill="#ffe9dd" fill-opacity="0.252" filter="url(#bl9)"/>
<path d="M400.0 505.0C400.7 514.2 403.5 540.8 404.0 560.0C404.5 579.2 404.0 601.3 403.0 620.0C402.0 638.7 398.8 663.3 398.0 672.0" fill="none" stroke="#ffe9dd" stroke-opacity="0.54" stroke-width="6.5" stroke-linecap="round" stroke-linejoin="round" filter="url(#bl2)" />
<ellipse cx="295" cy="444" rx="14" ry="8" fill="#ffe9dd" fill-opacity="0.36" filter="url(#bl4)" transform="rotate(-20 295 444)"/>
<ellipse cx="221" cy="520" rx="11" ry="34" fill="#ffe9dd" fill-opacity="0.36" filter="url(#bl6)"/>
<ellipse cx="347" cy="431" rx="32" ry="8" fill="#ffe9dd" fill-opacity="0.302" filter="url(#bl6)"/>
<ellipse cx="262" cy="590" rx="16" ry="10" fill="#ffe9dd" fill-opacity="0.288" filter="url(#bl4)" transform="rotate(35 262 590)"/>
<path d="M247.0 431.0C250.8 430.0 261.2 426.2 270.0 425.0C278.8 423.8 291.3 423.5 300.0 424.0C308.7 424.5 318.3 427.3 322.0 428.0" fill="none" stroke="#2e1f1b" stroke-opacity="0.274" stroke-width="4" stroke-linecap="round" stroke-linejoin="round" filter="url(#bl2)" />
<path d="M215.0 462.0C217.8 459.5 224.8 451.2 232.0 447.0C239.2 442.8 253.7 438.7 258.0 437.0" fill="none" stroke="#2e1f1b" stroke-opacity="0.259" stroke-width="4" stroke-linecap="round" stroke-linejoin="round" filter="url(#bl2)" />
<path d="M222.0 480.0C225.0 477.2 233.3 467.5 240.0 463.0C246.7 458.5 253.7 455.3 262.0 453.0C270.3 450.7 285.3 449.7 290.0 449.0" fill="none" stroke="#2e1f1b" stroke-opacity="0.216" stroke-width="4" stroke-linecap="round" stroke-linejoin="round" filter="url(#bl2)" />
<path d="M330.0 420.0C334.2 420.7 345.8 423.0 355.0 424.0C364.2 425.0 375.8 425.0 385.0 426.0C394.2 427.0 405.8 429.3 410.0 430.0" fill="none" stroke="#2e1f1b" stroke-opacity="0.202" stroke-width="4" stroke-linecap="round" stroke-linejoin="round" filter="url(#bl2)" />
<path d="M262.0 415.0C265.8 414.6 276.7 412.8 285.0 412.5C293.3 412.2 307.5 412.9 312.0 413.0" fill="none" stroke="#ffe9dd" stroke-opacity="0.432" stroke-width="5" stroke-linecap="round" stroke-linejoin="round" filter="url(#bl2)" />
<path d="M219.0 456.0C221.8 453.8 230.3 446.2 236.0 443.0C241.7 439.8 250.2 438.0 253.0 437.0" fill="none" stroke="#ffe9dd" stroke-opacity="0.432" stroke-width="4" stroke-linecap="round" stroke-linejoin="round" filter="url(#bl2)" />
<path d="M232.0 473.0C234.7 470.7 241.7 462.8 248.0 459.0C254.3 455.2 266.3 451.5 270.0 450.0" fill="none" stroke="#ffe9dd" stroke-opacity="0.324" stroke-width="4" stroke-linecap="round" stroke-linejoin="round" filter="url(#bl2)" />
<path d="M215.0 500.0C216.2 505.0 218.5 520.0 222.0 530.0C225.5 540.0 232.0 550.0 236.0 560.0C240.0 570.0 244.3 585.0 246.0 590.0" fill="none" stroke="#ffe9dd" stroke-opacity="0.288" stroke-width="5" stroke-linecap="round" stroke-linejoin="round" filter="url(#bl2)" />
<path d="M226.0 512.0C227.3 516.7 230.3 530.3 234.0 540.0C237.7 549.7 245.7 565.0 248.0 570.0" fill="none" stroke="#2e1f1b" stroke-opacity="0.158" stroke-width="4" stroke-linecap="round" stroke-linejoin="round" filter="url(#bl2)" />
<path d="M624.0 532.0C625.7 525.3 631.2 505.3 634.0 492.0C636.8 478.7 639.3 464.7 641.0 452.0C642.7 439.3 644.0 427.0 644.0 416.0C644.0 405.0 643.2 395.3 641.0 386.0C638.8 376.7 635.5 367.2 631.0 360.0C626.5 352.8 620.2 347.0 614.0 343.0C607.8 339.0 600.8 336.5 594.0 336.0C587.2 335.5 576.5 339.3 573.0 340.0" fill="none" stroke="#7a4f40" stroke-opacity="0.115" stroke-width="70" stroke-linecap="round" stroke-linejoin="round" filter="url(#bl9)" />
<path d="M573.0 340.0C569.7 341.0 558.7 346.0 553.0 346.0C547.3 346.0 542.3 344.0 539.0 340.0C535.7 336.0 532.8 328.3 533.0 322.0C533.2 315.7 536.3 308.3 540.0 302.0C543.7 295.7 549.3 289.7 555.0 284.0C560.7 278.3 567.8 273.0 574.0 268.0C580.2 263.0 586.5 258.3 592.0 254.0C597.5 249.7 604.5 244.0 607.0 242.0" fill="none" stroke="#7a4f40" stroke-opacity="0.115" stroke-width="34" stroke-linecap="round" stroke-linejoin="round" filter="url(#bl6)" />
<path d="M539.0 333.0C540.5 334.8 544.3 341.3 548.0 344.0C551.7 346.7 558.8 348.2 561.0 349.0" fill="none" stroke="#2e1f1b" stroke-opacity="0.36" stroke-width="2.2" stroke-linecap="round" stroke-linejoin="round" filter="url(#bl1_2)" />
<ellipse cx="586" cy="458" rx="34" ry="46" fill="#2e1f1b" fill-opacity="0.23" filter="url(#bl13)"/>
<path d="M662.0 510.0C664.2 503.3 672.0 481.7 675.0 470.0C678.0 458.3 679.1 450.0 680.0 440.0C680.9 430.0 681.2 419.2 680.5 410.0C679.8 400.8 678.4 393.3 676.0 385.0C673.6 376.7 670.3 367.8 666.0 360.0C661.7 352.2 656.0 344.7 650.0 338.0C644.0 331.3 636.7 324.3 630.0 320.0C623.3 315.7 616.3 313.2 610.0 312.0C603.7 310.8 595.0 312.8 592.0 313.0" fill="none" stroke="#2e1f1b" stroke-opacity="0.331" stroke-width="17" stroke-linecap="round" stroke-linejoin="round" filter="url(#bl3)" />
<path d="M656.0 512.0C658.0 505.0 665.7 482.8 668.0 470.0C670.3 457.2 670.2 445.8 670.0 435.0C669.8 424.2 669.2 415.0 667.0 405.0C664.8 395.0 661.0 383.8 657.0 375.0C653.0 366.2 645.3 355.8 643.0 352.0" fill="none" stroke="#2e1f1b" stroke-opacity="0.36" stroke-width="26" stroke-linecap="round" stroke-linejoin="round" filter="url(#bl6)" />
<path d="M600.0 530.0C604.2 528.7 617.0 525.0 625.0 522.0C633.0 519.0 644.2 513.7 648.0 512.0" fill="none" stroke="#2e1f1b" stroke-opacity="0.216" stroke-width="10" stroke-linecap="round" stroke-linejoin="round" filter="url(#bl4)" />
<path d="M653.0 508.0C655.3 501.3 663.8 480.7 667.0 468.0C670.2 455.3 671.5 443.7 672.0 432.0C672.5 420.3 671.9 409.0 670.0 398.0C668.1 387.0 664.8 374.9 660.9 366.0C657.0 357.1 652.0 350.8 646.7 344.7C641.5 338.6 632.3 331.9 629.4 329.4" fill="none" stroke="#2e1f1b" stroke-opacity="0.432" stroke-width="1.5" stroke-linecap="round" stroke-linejoin="round" filter="url(#bl0_7)" />
<path d="M658.0 508.0C660.3 501.3 668.8 480.7 672.0 468.0C675.2 455.3 676.5 443.7 677.0 432.0C677.5 420.3 676.9 409.0 675.0 398.0C673.1 387.0 669.5 375.1 665.4 366.0C661.3 356.9 655.9 349.8 650.2 343.2C644.5 336.6 634.5 329.2 631.4 326.4" fill="none" stroke="#2e1f1b" stroke-opacity="0.36" stroke-width="1.5" stroke-linecap="round" stroke-linejoin="round" filter="url(#bl0_7)" />
<path d="M647.0 508.0C649.3 501.3 657.8 480.7 661.0 468.0C664.2 455.3 665.5 443.7 666.0 432.0C666.5 420.3 665.8 409.0 664.0 398.0C662.2 387.0 659.1 374.6 655.5 366.0C651.9 357.4 647.2 352.0 642.5 346.5C637.8 341.0 629.6 335.2 627.0 333.0" fill="none" stroke="#2e1f1b" stroke-opacity="0.36" stroke-width="1.5" stroke-linecap="round" stroke-linejoin="round" filter="url(#bl0_7)" />
<path d="M640.0 508.0C642.3 501.3 650.8 480.7 654.0 468.0C657.2 455.3 658.5 443.7 659.0 432.0C659.5 420.3 658.6 409.0 657.0 398.0C655.4 387.0 652.4 374.2 649.2 366.0C646.0 357.8 641.8 353.4 637.6 348.6C633.4 343.8 626.4 339.1 624.2 337.2" fill="none" stroke="#2e1f1b" stroke-opacity="0.288" stroke-width="1.5" stroke-linecap="round" stroke-linejoin="round" filter="url(#bl0_7)" />
<path d="M517.0 352.0C519.0 354.7 523.8 364.2 529.0 368.0C534.2 371.8 540.3 374.0 548.0 375.0C555.7 376.0 566.7 375.3 575.0 374.0C583.3 372.7 594.2 368.2 598.0 367.0" fill="none" stroke="#2e1f1b" stroke-opacity="0.259" stroke-width="9" stroke-linecap="round" stroke-linejoin="round" filter="url(#bl3)" />
<path d="M617.0 262.0C615.2 264.3 610.8 271.5 606.0 276.0C601.2 280.5 593.5 284.5 588.0 289.0C582.5 293.5 576.8 298.2 573.0 303.0C569.2 307.8 566.3 315.5 565.0 318.0" fill="none" stroke="#2e1f1b" stroke-opacity="0.216" stroke-width="8" stroke-linecap="round" stroke-linejoin="round" filter="url(#bl3)" />
<path d="M466.0 646.0C465.3 650.0 462.5 660.3 462.0 670.0C461.5 679.7 462.8 698.3 463.0 704.0" fill="none" stroke="#2e1f1b" stroke-opacity="0.446" stroke-width="8" stroke-linecap="round" stroke-linejoin="round" filter="url(#bl2)" />
<path d="M407.5 567.0C407.7 568.5 408.4 573.0 408.5 576.0C408.6 579.0 408.1 583.5 408.0 585.0" fill="none" stroke="#120b09" stroke-opacity="0.648" stroke-width="2.4" stroke-linecap="round" stroke-linejoin="round" filter="url(#bl0_7)" />
<path d="M468.0 650.0C470.7 647.0 478.0 637.7 484.0 632.0C490.0 626.3 500.7 618.7 504.0 616.0" fill="none" stroke="#2e1f1b" stroke-opacity="0.36" stroke-width="9" stroke-linecap="round" stroke-linejoin="round" filter="url(#bl3)" />
<ellipse cx="470" cy="423" rx="40" ry="14" fill="#ffe9dd" fill-opacity="0.216" filter="url(#bl9)"/>
<path d="M606.0 506.0C608.7 496.0 618.7 463.0 622.0 446.0C625.3 429.0 626.7 417.0 626.0 404.0C625.3 391.0 619.3 374.0 618.0 368.0" fill="none" stroke="#ffe9dd" stroke-opacity="0.086" stroke-width="18" stroke-linecap="round" stroke-linejoin="round" filter="url(#bl9)" />
<path d="M520.0 345.0C519.7 342.2 516.8 334.8 518.0 328.0C519.2 321.2 522.5 311.7 527.0 304.0C531.5 296.3 537.8 289.0 545.0 282.0C552.2 275.0 561.7 268.5 570.0 262.0C578.3 255.5 590.8 246.2 595.0 243.0" fill="none" stroke="#ffe9dd" stroke-opacity="0.216" stroke-width="8" stroke-linecap="round" stroke-linejoin="round" filter="url(#bl4)" />
<ellipse cx="440" cy="656" rx="14" ry="28" fill="#ffe9dd" fill-opacity="0.216" filter="url(#bl9)"/>
<path d="M446.0 433.0C448.0 432.0 453.3 428.3 458.0 427.0C462.7 425.7 468.7 424.7 474.0 425.0C479.3 425.3 485.3 426.8 490.0 429.0C494.7 431.2 500.0 436.5 502.0 438.0" fill="none" stroke="#ffe9dd" stroke-opacity="0.54" stroke-width="6" stroke-linecap="round" stroke-linejoin="round" filter="url(#bl2)" />
<path d="M449.0 440.5C450.8 439.7 455.8 436.6 460.0 435.5C464.2 434.4 469.3 433.7 474.0 434.0C478.7 434.3 484.2 435.8 488.0 437.5C491.8 439.2 495.5 443.3 497.0 444.5" fill="none" stroke="#2e1f1b" stroke-opacity="0.432" stroke-width="2.6" stroke-linecap="round" stroke-linejoin="round" filter="url(#bl1_2)" />
<path d="M454.0 454.0C455.5 452.9 459.7 449.2 463.0 447.5C466.3 445.8 470.3 444.3 474.0 444.0C477.7 443.7 481.8 444.4 485.0 445.5C488.2 446.6 491.7 449.7 493.0 450.5" fill="none" stroke="#ffe9dd" stroke-opacity="0.432" stroke-width="3" stroke-linecap="round" stroke-linejoin="round" filter="url(#bl1_2)" />
<path d="M457.0 463.5C458.7 464.1 463.5 466.2 467.0 467.0C470.5 467.8 474.3 468.4 478.0 468.0C481.7 467.6 487.2 465.1 489.0 464.5" fill="none" stroke="#ffe9dd" stroke-opacity="0.396" stroke-width="3" stroke-linecap="round" stroke-linejoin="round" filter="url(#bl1_2)" />
<path d="M453.0 467.0C455.0 467.8 460.8 471.0 465.0 472.0C469.2 473.0 473.5 473.8 478.0 473.0C482.5 472.2 489.7 468.4 492.0 467.5" fill="none" stroke="#2e1f1b" stroke-opacity="0.324" stroke-width="2" stroke-linecap="round" stroke-linejoin="round" filter="url(#bl1_2)" />
<path d="M440.0 436.0C439.0 439.3 436.3 447.0 434.0 456.0C431.7 465.0 429.0 477.7 426.0 490.0C423.0 502.3 418.7 518.0 416.0 530.0C413.3 542.0 411.0 556.7 410.0 562.0" fill="none" stroke="#ffe9dd" stroke-opacity="0.288" stroke-width="7" stroke-linecap="round" stroke-linejoin="round" filter="url(#bl3)" />
<ellipse cx="425" cy="432" rx="9" ry="13" fill="#2e1f1b" fill-opacity="0.274" filter="url(#bl4)"/>
<ellipse cx="420" cy="500" rx="14" ry="26" fill="#2e1f1b" fill-opacity="0.158" filter="url(#bl6)"/>
<ellipse cx="520" cy="470" rx="22" ry="14" fill="#ffe9dd" fill-opacity="0.216" filter="url(#bl6)" transform="rotate(20 520 470)"/>
<ellipse cx="505" cy="545" rx="34" ry="30" fill="#ffe9dd" fill-opacity="0.13" filter="url(#bl9)"/>
<defs>
<linearGradient id="tuskA" x1="0" y1="0" x2="0.12" y2="1"><stop offset="0" stop-color="#ecd3c6"/><stop offset=".5" stop-color="#dfc0b2"/><stop offset="1" stop-color="#b39386"/></linearGradient>
<linearGradient id="tuskB" x1="0.1" y1="0" x2="0.3" y2="1"><stop offset="0" stop-color="#a88a7c"/><stop offset=".3" stop-color="#c6a699"/><stop offset="1" stop-color="#d8b9ac"/></linearGradient>
<linearGradient id="tongue" x1="0" y1="0" x2="1" y2="0.4"><stop offset="0" stop-color="#f3ddd2"/><stop offset="1" stop-color="#d4b6aa"/></linearGradient>
</defs>
<use href="#esil" fill="none" stroke="#7a5f55" stroke-opacity=".55" stroke-width="1.6"/>
<path d="M531.0 596.0C534.5 595.0 541.2 598.7 546.0 600.0C550.8 601.3 557.2 601.0 560.0 604.0C562.8 607.0 562.4 612.3 562.5 618.0C562.6 623.7 562.0 631.2 560.5 638.0C559.0 644.8 555.2 652.2 553.5 659.0C551.8 665.8 553.2 673.5 550.5 679.0C547.8 684.5 540.6 691.5 537.0 692.0C533.4 692.5 531.2 687.3 529.0 682.0C526.8 676.7 525.2 668.7 524.0 660.0C522.8 651.3 521.8 639.0 522.0 630.0C522.2 621.0 523.5 611.7 525.0 606.0C526.5 600.3 527.5 597.0 531.0 596.0Z" fill="#8a6f64" fill-opacity="0.95"  />
<path d="M526.0 614.3Q528.5 649.5 531.3 684.6M533.0 609.2Q534.3 648.0 533.3 686.8M539.5 617.3Q542.9 649.4 540.1 681.6M545.1 616.9Q544.0 647.6 541.1 678.2M552.1 611.7Q546.2 645.0 545.6 678.2M557.2 603.2Q552.9 639.8 552.3 676.4" fill="none" stroke="#1f1411" stroke-opacity=".85" stroke-width="2.1" stroke-linecap="round" filter="url(#bl0_7)"/>
<path d="M529.0 605.0Q534.2 640.0 531.8 675.0M536.1 605.2Q539.0 639.1 535.1 673.1M541.5 609.4Q537.4 642.9 538.2 676.4M547.6 613.3Q548.9 646.9 544.6 680.5M553.6 601.3Q552.9 633.6 546.2 666.0M560.0 615.1Q553.6 644.3 550.8 673.4" fill="none" stroke="#3a2922" stroke-opacity=".7" stroke-width="1.2" stroke-linecap="round" filter="url(#bl0_7)"/>
<path d="M531.6 603.8Q533.3 642.9 532.3 682.1M537.1 604.9Q537.9 638.7 537.9 672.5M542.9 619.6Q541.3 651.0 540.2 682.4M549.1 609.8Q551.3 641.4 546.0 673.0M555.7 602.5Q550.6 635.3 550.5 668.1" fill="none" stroke="#d9bdb0" stroke-opacity=".6" stroke-width="1.6" stroke-linecap="round" filter="url(#bl0_7)"/>
<path d="M507.0 613.0C507.8 606.2 514.2 609.3 518.0 607.0C521.8 604.7 528.7 596.0 530.0 599.0C531.3 602.0 526.5 615.7 526.0 625.0C525.5 634.3 526.2 645.8 527.0 655.0C527.8 664.2 529.5 673.8 531.0 680.0C532.5 686.2 536.7 691.0 536.0 692.0C535.3 693.0 529.9 689.5 527.0 686.0C524.1 682.5 520.8 677.3 518.5 671.0C516.2 664.7 515.4 657.7 513.5 648.0C511.6 638.3 506.2 619.8 507.0 613.0Z" fill="#efd9ce" fill-opacity="1"  />
<path d="M528.0 601.0C527.4 605.5 524.8 618.8 524.5 628.0C524.2 637.2 525.1 647.3 526.0 656.0C526.9 664.7 528.5 674.2 530.0 680.0C531.5 685.8 534.2 689.2 535.0 691.0" fill="none" stroke="#33231e" stroke-opacity="0.75" stroke-width="1.6" stroke-linecap="round" stroke-linejoin="round" filter="url(#bl0_7)" />
<path d="M511.0 620.0C511.8 625.0 514.0 640.7 516.0 650.0C518.0 659.3 521.8 671.7 523.0 676.0" fill="none" stroke="#fff6f0" stroke-opacity="0.7" stroke-width="3" stroke-linecap="round" stroke-linejoin="round" filter="url(#bl1_2)" />
<path d="M519.0 612.0C519.3 616.7 520.0 630.7 521.0 640.0C522.0 649.3 524.3 663.3 525.0 668.0" fill="none" stroke="#b79a8e" stroke-opacity="0.5" stroke-width="2.5" stroke-linecap="round" stroke-linejoin="round" filter="url(#bl1_2)" />
<path d="M549.0 541.0C550.3 536.0 559.2 538.0 565.0 538.0C570.8 538.0 579.7 539.2 584.0 541.0C588.3 542.8 589.7 544.8 591.0 549.0C592.3 553.2 592.3 559.8 592.0 566.0C591.7 572.2 590.7 580.3 589.0 586.0C587.3 591.7 584.5 597.3 582.0 600.0C579.5 602.7 576.7 603.7 574.0 602.0C571.3 600.3 568.8 595.7 566.0 590.0C563.2 584.3 559.8 576.2 557.0 568.0C554.2 559.8 547.7 546.0 549.0 541.0Z" fill="#a98d82" fill-opacity="0.9" filter="url(#bl0_7)" />
<path d="M578.0 546.0C578.4 549.3 580.7 558.3 580.5 566.0C580.3 573.7 577.6 587.7 577.0 592.0" fill="none" stroke="#3a2922" stroke-opacity="0.55" stroke-width="1.2" stroke-linecap="round" stroke-linejoin="round" filter="url(#bl0_7)" />
<path d="M581.0 547.0C581.4 550.2 583.7 558.8 583.5 566.0C583.3 573.2 580.6 586.0 580.0 590.0" fill="none" stroke="#3a2922" stroke-opacity="0.55" stroke-width="1.2" stroke-linecap="round" stroke-linejoin="round" filter="url(#bl0_7)" />
<path d="M584.0 548.0C584.4 551.0 586.7 559.3 586.5 566.0C586.3 572.7 583.6 584.3 583.0 588.0" fill="none" stroke="#3a2922" stroke-opacity="0.55" stroke-width="1.2" stroke-linecap="round" stroke-linejoin="round" filter="url(#bl0_7)" />
<path d="M587.0 549.0C587.4 551.8 589.7 559.8 589.5 566.0C589.3 572.2 586.6 582.7 586.0 586.0" fill="none" stroke="#3a2922" stroke-opacity="0.55" stroke-width="1.2" stroke-linecap="round" stroke-linejoin="round" filter="url(#bl0_7)" />
<path d="M590.0 550.0C590.4 552.7 592.7 560.3 592.5 566.0C592.3 571.7 589.6 581.0 589.0 584.0" fill="none" stroke="#3a2922" stroke-opacity="0.55" stroke-width="1.2" stroke-linecap="round" stroke-linejoin="round" filter="url(#bl0_7)" />
<path d="M553.0 543.0C553.2 540.0 557.5 539.7 560.0 540.0C562.5 540.3 565.2 541.7 568.0 545.0C570.8 548.3 574.5 554.7 577.0 560.0C579.5 565.3 582.2 572.7 583.0 577.0C583.8 581.3 583.2 584.5 582.0 586.0C580.8 587.5 578.3 588.0 576.0 586.0C573.7 584.0 570.8 578.7 568.0 574.0C565.2 569.3 561.5 563.2 559.0 558.0C556.5 552.8 552.8 546.0 553.0 543.0Z" fill="url(#tongue)" fill-opacity="1"  />
<path d="M547.0 545.0C548.5 547.5 552.8 554.7 556.0 560.0C559.2 565.3 563.0 571.0 566.0 577.0C569.0 583.0 572.7 592.8 574.0 596.0" fill="none" stroke="#1f1411" stroke-opacity="0.85" stroke-width="1.8" stroke-linecap="round" stroke-linejoin="round" filter="url(#bl0_7)" />
<path d="M561.0 541.0C562.7 542.0 567.8 543.3 571.0 547.0C574.2 550.7 577.7 557.5 580.0 563.0C582.3 568.5 584.7 575.5 585.0 580.0C585.3 584.5 582.5 588.3 582.0 590.0" fill="none" stroke="#4a372f" stroke-opacity="0.6" stroke-width="1.3" stroke-linecap="round" stroke-linejoin="round" filter="url(#bl0_7)" />
<path d="M544.0 556.0C545.5 559.7 549.8 571.0 553.0 578.0C556.2 585.0 559.5 593.0 563.0 598.0C566.5 603.0 570.3 607.3 574.0 608.0C577.7 608.7 582.2 606.0 585.0 602.0C587.8 598.0 590.0 587.0 591.0 584.0" fill="none" stroke="#fbeae0" stroke-opacity="0.55" stroke-width="4" stroke-linecap="round" stroke-linejoin="round" filter="url(#bl1_2)" />
<path d="M551.0 534.0C553.5 534.8 560.2 538.3 566.0 539.0C571.8 539.7 579.8 539.8 586.0 538.0C592.2 536.2 600.2 529.7 603.0 528.0" fill="none" stroke="#2a1b17" stroke-opacity="0.7" stroke-width="3" stroke-linecap="round" stroke-linejoin="round" filter="url(#bl1_2)" />
<path d="M592.0 531.0C595.3 527.0 604.0 523.7 612.0 523.0C620.0 522.3 633.3 524.5 640.0 527.0C646.7 529.5 652.0 534.7 652.0 538.0C652.0 541.3 645.0 544.8 640.0 547.0C635.0 549.2 628.0 550.9 622.0 551.5C616.0 552.1 609.0 551.2 604.0 550.5C599.0 549.8 594.0 550.2 592.0 547.0C590.0 543.8 588.7 535.0 592.0 531.0Z" fill="#e3c7ba" fill-opacity="0.8" filter="url(#bl1_2)" />
<path d="M596.0 548.0C600.0 548.5 612.3 551.3 620.0 551.0C627.7 550.7 638.3 546.8 642.0 546.0" fill="none" stroke="#5b463e" stroke-opacity="0.5" stroke-width="2.5" stroke-linecap="round" stroke-linejoin="round" filter="url(#bl1_2)" />
<path d="M643.0 531.0C643.7 528.0 648.5 524.2 652.0 522.0C655.5 519.8 659.2 518.5 664.0 518.0C668.8 517.5 674.7 519.0 681.0 519.2C687.3 519.4 695.2 519.6 702.0 519.3C708.8 519.0 717.1 517.1 722.0 517.4C726.9 517.7 730.7 519.5 731.2 521.3C731.7 523.1 729.0 525.4 725.0 528.0C721.0 530.6 713.8 534.7 707.0 537.0C700.2 539.3 691.8 540.8 684.0 541.8C676.2 542.8 666.0 543.3 660.0 543.0C654.0 542.7 650.8 542.0 648.0 540.0C645.2 538.0 642.3 534.0 643.0 531.0Z" fill="url(#tuskA)" fill-opacity="1"  />
<path d="M648.0 531.0C649.3 529.7 653.0 524.9 656.0 523.0C659.0 521.1 664.3 520.1 666.0 519.5" fill="none" stroke="#6d564d" stroke-opacity="0.55" stroke-width="2" stroke-linecap="round" stroke-linejoin="round" filter="url(#bl1_2)" />
<path d="M552.0 521.0C552.2 518.1 553.7 514.3 556.0 512.0C558.3 509.7 561.2 508.4 566.0 507.0C570.8 505.6 578.8 504.5 585.0 503.6C591.2 502.7 598.9 501.1 603.0 501.4C607.1 501.7 609.2 502.7 609.5 505.4C609.8 508.1 608.6 513.8 605.0 517.5C601.4 521.2 594.5 525.0 588.0 527.5C581.5 530.0 571.5 532.3 566.0 532.6C560.5 532.9 557.3 531.4 555.0 529.5C552.7 527.6 551.8 523.9 552.0 521.0Z" fill="url(#tuskB)" fill-opacity="1"  />
<path d="M553.0 518.0C554.0 516.6 555.8 511.7 559.0 509.5C562.2 507.3 566.8 506.2 572.0 505.0C577.2 503.8 584.7 502.9 590.0 502.2C595.3 501.5 601.7 501.0 604.0 500.8" fill="none" stroke="#3b2a24" stroke-opacity="0.55" stroke-width="2.2" stroke-linecap="round" stroke-linejoin="round" filter="url(#bl1_2)" />
<path d="M560.0 531.5C563.3 531.1 573.7 530.7 580.0 529.0C586.3 527.3 593.5 524.3 598.0 521.5C602.5 518.7 605.5 513.6 607.0 512.0" fill="none" stroke="#f6e3d8" stroke-opacity="0.75" stroke-width="1.6" stroke-linecap="round" stroke-linejoin="round" filter="url(#bl0_7)" />
<path d="M453.0 457.5C454.5 456.2 458.8 452.0 462.0 450.0C465.2 448.0 468.5 446.2 472.0 445.6C475.5 445.0 479.8 445.5 483.0 446.4C486.2 447.3 489.0 449.5 491.0 451.0C493.0 452.5 494.3 454.8 495.0 455.5" fill="none" stroke="#4a3730" stroke-opacity="0.75" stroke-width="1.5" stroke-linecap="round" stroke-linejoin="round" filter="url(#bl0_7)" />
<path d="M455.0 458.5C456.5 459.1 460.5 461.1 464.0 461.8C467.5 462.6 472.2 463.3 476.0 463.0C479.8 462.7 484.0 461.2 487.0 460.0C490.0 458.8 492.8 456.3 494.0 455.6" fill="none" stroke="#6a544b" stroke-opacity="0.55" stroke-width="1.2" stroke-linecap="round" stroke-linejoin="round" filter="url(#bl0_7)" />
<circle cx="476.6" cy="452.6" r="4.2" fill="none" stroke="#7a6258" stroke-opacity=".7" stroke-width="1"/>
<path d="M454.0 465.0C455.7 465.8 460.2 468.6 464.0 469.5C467.8 470.4 472.8 471.1 477.0 470.5C481.2 469.9 487.0 466.8 489.0 466.0" fill="none" stroke="#7a6258" stroke-opacity="0.35" stroke-width="1.6" stroke-linecap="round" stroke-linejoin="round" filter="url(#bl1_2)" />
<path d="M604.0 240.0C605.3 238.1 608.9 236.8 611.0 236.5C613.1 236.2 615.4 236.2 616.5 238.5C617.6 240.8 617.7 245.9 617.5 250.0C617.3 254.1 616.6 260.3 615.5 263.0C614.4 265.7 612.6 266.8 611.0 266.0C609.4 265.2 607.3 261.0 606.0 258.0C604.7 255.0 603.3 251.0 603.0 248.0C602.7 245.0 602.7 241.9 604.0 240.0Z" fill="#7b6258" fill-opacity="0.85" filter="url(#bl0_7)" />
<path d="M608.0 243.0C608.6 240.6 611.7 240.3 613.0 240.5C614.3 240.7 615.5 241.4 616.0 244.0C616.5 246.6 616.5 253.0 616.0 256.0C615.5 259.0 614.1 262.2 613.0 262.0C611.9 261.8 610.3 258.2 609.5 255.0C608.7 251.8 607.4 245.4 608.0 243.0Z" fill="#f3ddd2" fill-opacity="0.9" filter="url(#bl0_7)" />
<path d="M611.5 241.0C611.4 242.7 610.8 247.5 611.0 251.0C611.2 254.5 612.2 260.2 612.5 262.0" fill="none" stroke="#5a443c" stroke-opacity="0.7" stroke-width="1.3" stroke-linecap="round" stroke-linejoin="round" filter="url(#bl0_7)" />
<path d="M481.5 380V720M190 484.5H690" fill="none" stroke="#6b5148" stroke-opacity=".38" stroke-width="1"/>
</g>
 </svg>
 <div class="b vbtn" style="top:344px"></div>
 <div class="b vbtn" style="top:382px"></div>
 <div class="b vbtn" style="top:420px"></div>
 <div class="b vbtn" style="top:458px"></div>
 <svg width="33" height="33" viewBox="0 0 33 33" style="left:8px;top:344px" fill="none" stroke="#b9b9b9" stroke-width="1.6" stroke-linecap="round" stroke-linejoin="round">
  <path d="M17 21.5 C22 21.5 24 19 24 16.5 C24 13.5 21 11.5 16.5 11.5 C12 11.5 9.5 13.5 9.5 16 C9.5 18 11 19.5 13.5 20.2"/>
  <path d="M15.5 18.5 L18.5 21.5 L15.5 24" />
 </svg>
 <svg width="33" height="33" viewBox="0 0 33 33" style="left:8px;top:382px" fill="none" stroke="#b9b9b9" stroke-width="1.7" stroke-linecap="butt" stroke-linejoin="miter">
  <path d="M14.5 14.5 H10 V23 H18.5 V18.5"/>
  <path d="M14.5 18.5 L22.5 10.5 M17.5 10.3 H22.7 V15.5" stroke-linecap="round"/>
 </svg>
 <svg width="33" height="33" viewBox="0 0 33 33" style="left:8px;top:420px" fill="none" stroke="#b9b9b9" stroke-width="1.6">
  <circle cx="16.5" cy="16.5" r="6.3"/><circle cx="16.5" cy="16.5" r="2.3"/>
 </svg>
 <svg width="33" height="33" viewBox="0 0 33 33" style="left:8px;top:458px" fill="none" stroke="#b9b9b9" stroke-width="1.5" stroke-linecap="round" stroke-linejoin="round">
  <path d="M12 12.5 A6.5 6.5 0 1 0 16.5 10.5"/>
  <path d="M18.5 8 L16 10.5 L18.5 13"/>
  <path d="M14.8 15.6 L18.2 19 M18.2 15.6 L14.8 19" stroke-width="1.2"/>
 </svg>
</div>

<div class="b" id="titlebar"></div>
<svg width="16" height="16" viewBox="0 0 16 16" style="left:1.5px;top:3.8px"><rect x="0" y="0" width="15.8" height="15.6" rx="2" fill="#16275a"/><g transform="translate(8 7.9) scale(.345) translate(-1313.3 -633.1)"><path d="M1306 617.4 H1327 Q1330.6 617.4 1330 621 L1326.6 646 Q1326.2 648.8 1323 648.8 H1319.8 L1323.2 624.2 H1306 Q1302.6 624.2 1302.6 620.8 Q1302.6 617.4 1306 617.4Z M1308 630 H1322.4 L1321.6 636.2 H1309.4 L1303.4 647 Q1302.4 648.8 1299.8 648.8 Q1295 648.8 1297 644.6 L1303 633 Q1304.6 630 1308 630Z" fill="#4fc0f0"/></g></svg>
<svg width="130" height="24" viewBox="1370 0 130 24" style="left:1370px;top:0" fill="none" stroke="#3a3a3a" stroke-width="1">
<path d="M1375.5 11.5 H1384.5" stroke="#8a8a8a"/>
<rect x="1423.5" y="9.5" width="6" height="6" rx="1.2"/><path d="M1425.5 9.5 V8.7 Q1425.5 7.5 1426.7 7.5 H1430.3 Q1431.5 7.5 1431.5 8.7 V12.3 Q1431.5 13.5 1430.3 13.5 H1429.5"/>
<path d="M1471 7 L1479.5 15.6 M1479.5 7 L1471 15.6" stroke-width="1.1"/>
</svg>
<div class="b btn" style="left:1147.4px;top:53.6px;width:81.2px;height:23.2px"></div>
<div class="b btn2" style="left:1132px;top:86px;width:90.8px;height:27.4px"></div>
<div class="b sep" style="left:973px;top:122.6px;width:250px"></div>
<div class="b" style="left:973.5px;top:158.6px;width:249.6px;height:702.8px;background:#a9a9a9;border:2px solid #9b9b9b;border-bottom-color:#a9a9a9;border-right-color:#a4a4a4"></div>
<div class="b ahead" style="top:160.8px;height:29.7px"></div>
<div class="b abody" style="top:190.5px"></div>
<div class="b acol" style="top:190.5px"></div>
<div class="b hamb" style="top:247.3px"></div>
<div class="b inp" style="left:1131px;top:197.7px;width:65.3px;height:20px"></div>
<div class="b inp" style="left:1131px;top:222.2px;width:65.3px;height:20px"></div>
<div class="b exp" style="left:1084px;top:255.0px;width:69px;height:8.3px"></div>
<div class="b ahead" style="top:272.0px;height:30.2px"></div>
<div class="b abody" style="top:302.2px"></div>
<div class="b acol" style="top:302.2px"></div>
<div class="b hamb" style="top:359.0px"></div>
<div class="b inp" style="left:1131px;top:309.4px;width:65.3px;height:20px"></div>
<div class="b inp" style="left:1131px;top:333.9px;width:65.3px;height:20px"></div>
<div class="b exp" style="left:1084px;top:366.7px;width:69px;height:8.3px"></div>
<div class="b combo" style="left:1339.6px;top:77.6px;width:130.2px;height:19.8px"></div>
<div class="b chk" style="left:1238.4px;top:107.8px"></div>
<div class="b inp" style="left:1408px;top:161.2px;width:65.2px;height:19.3px"></div>
<div class="b inp" style="left:1408px;top:185.5px;width:65.2px;height:19.3px"></div>
<div class="b inp" style="left:1408px;top:210.3px;width:65.2px;height:19.3px"></div>
<div class="b inp" style="left:1408px;top:335.2px;width:65.2px;height:19.3px"></div>
<div class="b inp" style="left:1408px;top:415.8px;width:65.2px;height:19.3px"></div>
<div class="b inp" style="left:1408px;top:440.4px;width:65.2px;height:19.3px"></div>
<div class="b combo" style="left:1342.3px;top:236.5px;width:130.6px;height:19.8px"></div>
<div class="b exp" style="left:1330px;top:267.2px;width:69px;height:8.5px"></div>
<div class="b chk" style="left:1238.4px;top:313.6px"></div>
<div class="b" style="left:1328px;top:369.3px;width:164px;height:4.4px;border-radius:2.2px;background:#d0d0d0;border:1px solid #c2c2c2"></div>
<div class="b" style="left:1328px;top:368.8px;width:103px;height:5.2px;border-radius:2.6px;background:#1a86dc"></div>
<div class="b" style="left:1428.3px;top:364.3px;width:12.4px;height:13.2px;border-radius:2.5px;background:linear-gradient(#f0f0f0,#e2e2e2);border:1px solid #c6c6c6"></div>
<div class="b chk" style="left:1238.4px;top:472.8px"></div>
<div class="b btn" style="left:1238.1px;top:494px;width:236.6px;height:23.6px"></div>
<div class="b sep" style="left:1236.3px;top:532.8px;width:250px"></div>
<div class="b sep" style="left:1236.3px;top:740.6px;width:250px"></div>
<div class="b sep" style="left:1236.3px;top:844.4px;width:250px"></div>
<div class="b" style="left:1285.8px;top:606.6px;width:53px;height:53px;border-radius:7px;background:#4cc0f2"></div>
<div class="b" style="left:1288.3px;top:609.1px;width:48px;height:48px;border-radius:4.5px;background:#17295a"></div>
<div class="b radio" style="left:1242.1px;top:784.2px"></div>
<div class="b radio" style="left:1242.1px;top:814.9px"></div>
<div class="b" style="left:1245.8px;top:818.6px;width:5.6px;height:5.6px;border-radius:50%;background:#2a2a2a"></div>
<div class="b" style="left:1237.8px;top:855.6px;width:245.8px;height:23.8px;border-radius:4px;background:#9ee777;border:1.6px solid #7ecb58"></div>
<div class="b sbtn" style="left:1139.8px;top:864.2px;border:1px solid #b9b9b9;border-radius:2px"></div>
<div class="b sbtn" style="left:1164.6px;top:864.2px"></div>
<div class="b sbtn" style="left:1197.4px;top:864.2px"></div>
<svg width="1500" height="888" viewBox="0 0 1500 888" style="left:0;top:0;pointer-events:none"><g transform="translate(1208.7 210.0)"><circle r="5.9" fill="none" stroke="#6c6c6c" stroke-width="1"/><path d="M0 -1.6 V3.2" stroke="#5a5a5a" stroke-width="1.2"/><circle cy="-3.3" r=".8" fill="#5a5a5a"/></g>
<g transform="translate(1208.7 234.7)"><circle r="5.9" fill="none" stroke="#6c6c6c" stroke-width="1"/><path d="M0 -1.6 V3.2" stroke="#5a5a5a" stroke-width="1.2"/><circle cy="-3.3" r=".8" fill="#5a5a5a"/></g>
<path d="M1114.3 257.9 L1118.5 260.8 L1122.7 257.9" fill="none" stroke="#2a2a2a" stroke-width="1.1"/>
<path d="M981.6 204.8 Q990.2 196.2 998.8 204.8 Q990.2 213.4 981.6 204.8 Z" fill="#1c1c1c"/><circle cx="990.2" cy="204.8" r="3.3" fill="#1c1c1c" stroke="#e4e4e4" stroke-width="1.3"/><circle cx="989.2" cy="203.8" r=".8" fill="#d8d8d8"/>
<rect x="983.5" y="226.4" width="13.7" height="8.4" rx=".8" fill="#232323"/><path d="M985.6 226.6 V224.0 Q985.6 220.4 989.4 220.4 Q992.6 220.4 993 223.0" fill="none" stroke="#232323" stroke-width="1.7"/>
<path d="M984 252.6 H997.2" stroke="#b0b0b0" stroke-width="1.9"/>
<path d="M984 256.7 H997.2" stroke="#b0b0b0" stroke-width="1.9"/>
<path d="M984 260.8 H997.2" stroke="#b0b0b0" stroke-width="1.9"/>
<g transform="translate(1208.7 321.7)"><circle r="5.9" fill="none" stroke="#6c6c6c" stroke-width="1"/><path d="M0 -1.6 V3.2" stroke="#5a5a5a" stroke-width="1.2"/><circle cy="-3.3" r=".8" fill="#5a5a5a"/></g>
<g transform="translate(1208.7 346.4)"><circle r="5.9" fill="none" stroke="#6c6c6c" stroke-width="1"/><path d="M0 -1.6 V3.2" stroke="#5a5a5a" stroke-width="1.2"/><circle cy="-3.3" r=".8" fill="#5a5a5a"/></g>
<path d="M1114.3 369.6 L1118.5 372.4 L1122.7 369.6" fill="none" stroke="#2a2a2a" stroke-width="1.1"/>
<path d="M981.6 316.5 Q990.2 307.9 998.8 316.5 Q990.2 325.1 981.6 316.5 Z" fill="#1c1c1c"/><circle cx="990.2" cy="316.5" r="3.3" fill="#1c1c1c" stroke="#e4e4e4" stroke-width="1.3"/><circle cx="989.2" cy="315.5" r=".8" fill="#d8d8d8"/>
<rect x="983.5" y="338.1" width="13.7" height="8.4" rx=".8" fill="#232323"/><path d="M985.6 338.3 V335.7 Q985.6 332.1 989.4 332.1 Q992.6 332.1 993 334.7" fill="none" stroke="#232323" stroke-width="1.7"/>
<path d="M984 364.3 H997.2" stroke="#b0b0b0" stroke-width="1.9"/>
<path d="M984 368.4 H997.2" stroke="#b0b0b0" stroke-width="1.9"/>
<path d="M984 372.5 H997.2" stroke="#b0b0b0" stroke-width="1.9"/>
<path d="M1306 617.4 H1327 Q1330.6 617.4 1330 621 L1326.6 646 Q1326.2 648.8 1323 648.8 H1319.8 L1323.2 624.2 H1306 Q1302.6 624.2 1302.6 620.8 Q1302.6 617.4 1306 617.4Z M1308 630 H1322.4 L1321.6 636.2 H1309.4 L1303.4 647 Q1302.4 648.8 1299.8 648.8 Q1295 648.8 1297 644.6 L1303 633 Q1304.6 630 1308 630Z" fill="#4fc0f0"/>
<path d="M1145 875.7 H1157.6 M1151.3 869.4 V882" stroke="#4aa52e" stroke-width="1.7" fill="none"/>
<path d="M1171.4 870.6 L1181 880.8 M1181 870.6 L1171.4 880.8" stroke="#a3267c" stroke-width="1.7" fill="none"/>
<path d="M1207.2 875.2 H1202.6 V869.2 H1210.6 V872.8" stroke="#161616" stroke-width="1.7" fill="none"/><rect x="1207" y="873.4" width="8" height="8.2" stroke="#161616" stroke-width="1.7" fill="none"/>
<g transform="translate(1485.6 88.8)"><circle r="5.9" fill="none" stroke="#6c6c6c" stroke-width="1"/><path d="M0 -1.6 V3.2" stroke="#5a5a5a" stroke-width="1.2"/><circle cy="-3.3" r=".8" fill="#5a5a5a"/></g>
<g transform="translate(1485.6 115.2)"><circle r="5.9" fill="none" stroke="#6c6c6c" stroke-width="1"/><path d="M0 -1.6 V3.2" stroke="#5a5a5a" stroke-width="1.2"/><circle cy="-3.3" r=".8" fill="#5a5a5a"/></g>
<g transform="translate(1485.6 173.2)"><circle r="5.9" fill="none" stroke="#6c6c6c" stroke-width="1"/><path d="M0 -1.6 V3.2" stroke="#5a5a5a" stroke-width="1.2"/><circle cy="-3.3" r=".8" fill="#5a5a5a"/></g>
<g transform="translate(1485.6 197.8)"><circle r="5.9" fill="none" stroke="#6c6c6c" stroke-width="1"/><path d="M0 -1.6 V3.2" stroke="#5a5a5a" stroke-width="1.2"/><circle cy="-3.3" r=".8" fill="#5a5a5a"/></g>
<g transform="translate(1485.6 222.4)"><circle r="5.9" fill="none" stroke="#6c6c6c" stroke-width="1"/><path d="M0 -1.6 V3.2" stroke="#5a5a5a" stroke-width="1.2"/><circle cy="-3.3" r=".8" fill="#5a5a5a"/></g>
<g transform="translate(1485.6 247.2)"><circle r="5.9" fill="none" stroke="#6c6c6c" stroke-width="1"/><path d="M0 -1.6 V3.2" stroke="#5a5a5a" stroke-width="1.2"/><circle cy="-3.3" r=".8" fill="#5a5a5a"/></g>
<g transform="translate(1485.6 321.2)"><circle r="5.9" fill="none" stroke="#6c6c6c" stroke-width="1"/><path d="M0 -1.6 V3.2" stroke="#5a5a5a" stroke-width="1.2"/><circle cy="-3.3" r=".8" fill="#5a5a5a"/></g>
<g transform="translate(1485.6 347.8)"><circle r="5.9" fill="none" stroke="#6c6c6c" stroke-width="1"/><path d="M0 -1.6 V3.2" stroke="#5a5a5a" stroke-width="1.2"/><circle cy="-3.3" r=".8" fill="#5a5a5a"/></g>
<g transform="translate(1485.6 428.8)"><circle r="5.9" fill="none" stroke="#6c6c6c" stroke-width="1"/><path d="M0 -1.6 V3.2" stroke="#5a5a5a" stroke-width="1.2"/><circle cy="-3.3" r=".8" fill="#5a5a5a"/></g>
<g transform="translate(1485.6 453.4)"><circle r="5.9" fill="none" stroke="#6c6c6c" stroke-width="1"/><path d="M0 -1.6 V3.2" stroke="#5a5a5a" stroke-width="1.2"/><circle cy="-3.3" r=".8" fill="#5a5a5a"/></g>
<g transform="translate(1485.6 480.0)"><circle r="5.9" fill="none" stroke="#6c6c6c" stroke-width="1"/><path d="M0 -1.6 V3.2" stroke="#5a5a5a" stroke-width="1.2"/><circle cy="-3.3" r=".8" fill="#5a5a5a"/></g>
<g transform="translate(1485.6 506.6)"><circle r="5.9" fill="none" stroke="#6c6c6c" stroke-width="1"/><path d="M0 -1.6 V3.2" stroke="#5a5a5a" stroke-width="1.2"/><circle cy="-3.3" r=".8" fill="#5a5a5a"/></g>
<path d="M1456.2 86 H1463.6 L1459.9 90.2 Z" fill="#111"/>
<path d="M1459.2 244.8 H1466.6 L1462.9 249 Z" fill="#111"/>
<path d="M1360.3 270.1 L1364.5 272.9 L1368.7 270.1" fill="none" stroke="#2a2a2a" stroke-width="1.1"/></svg>
<span class="t" style="left:23.4px;top:7.0px;font-size:11.7px;letter-spacing:-0.03px;">BulgeExample</span>
<span class="t" style="left:6.2px;top:34.2px;font-size:11.5px;letter-spacing:-0.09px;">File</span>
<span class="t" style="left:37.0px;top:34.2px;font-size:11.5px;letter-spacing:-0.13px;">Assets</span>
<span class="t" style="left:83.4px;top:34.2px;font-size:11.5px;letter-spacing:0.38px;">Tutorial</span>
<span class="t" style="left:137.4px;top:34.2px;font-size:11.5px;letter-spacing:0.27px;">Help</span>
<span class="t" style="left:973.5px;top:63.8px;font-size:15px;font-weight:700;color:#1a1a1a;letter-spacing:0.60px;">Current View</span>
<span class="t" style="left:1174.1px;top:60.3px;font-size:11.5px;letter-spacing:-0.30px;">Reset</span>
<span class="t" style="left:1005.6px;top:94.9px;font-size:11.5px;letter-spacing:0.06px;">Relief Perspective</span>
<span class="t" style="left:1153.2px;top:94.9px;font-size:11.5px;letter-spacing:0.13px;">Observer</span>
<span class="t" style="left:973.9px;top:136.1px;font-size:15px;font-weight:700;color:#1b2c5b;letter-spacing:-0.33px;">Assets</span>
<span class="t" style="left:1032.2px;top:170.9px;font-size:12px;font-weight:700;color:#ffffff;letter-spacing:0.04px;">Animal - Elephant Bust</span>
<span class="t" style="left:1016.5px;top:205.3px;font-size:11.5px;letter-spacing:0.40px;">Max Angle</span>
<span class="t" style="left:1016.5px;top:230.0px;font-size:11.5px;letter-spacing:0.14px;">Height Scale %</span>
<span class="t" style="left:1135.0px;top:200.7px;font-size:10.5px;color:#c2c2c6;">80</span>
<span class="t" style="left:1135.0px;top:225.4px;font-size:10.5px;color:#c2c2c6;">65</span>
<span class="t" style="left:1084.6px;top:282.6px;font-size:12px;font-weight:700;color:#ffffff;letter-spacing:-0.31px;">Coin</span>
<span class="t" style="left:1016.5px;top:317.0px;font-size:11.5px;letter-spacing:0.40px;">Max Angle</span>
<span class="t" style="left:1016.5px;top:341.7px;font-size:11.5px;letter-spacing:0.14px;">Height Scale %</span>
<span class="t" style="left:1135.0px;top:312.4px;font-size:10.5px;color:#c2c2c6;">80</span>
<span class="t" style="left:1135.0px;top:337.1px;font-size:10.5px;color:#c2c2c6;">65</span>
<span class="t" style="left:1238.3px;top:56.9px;font-size:15px;font-weight:700;color:#1b2c5b;letter-spacing:0.46px;">Relief Type</span>
<span class="t" style="left:1238.3px;top:83.0px;font-size:11.5px;">Relief Type</span>
<span class="t" style="left:1343.6px;top:82.6px;font-size:11px;letter-spacing:-0.50px;">Raised</span>
<span class="t" style="left:1257.4px;top:109.8px;font-size:11.5px;letter-spacing:0.21px;">Invert Relief</span>
<span class="t" style="left:1238.3px;top:142.3px;font-size:15px;font-weight:700;color:#1b2c5b;letter-spacing:0.38px;">Relief Settings</span>
<span class="t" style="left:1238.3px;top:168.4px;font-size:11.5px;letter-spacing:0.34px;">Max Angle</span>
<span class="t" style="left:1412.0px;top:163.8px;font-size:11px;letter-spacing:0.03px;">80</span>
<span class="t" style="left:1238.3px;top:193.1px;font-size:11.5px;letter-spacing:0.10px;">Height Scale %</span>
<span class="t" style="left:1412.0px;top:188.1px;font-size:11px;letter-spacing:0.03px;">65</span>
<span class="t" style="left:1238.3px;top:217.5px;font-size:11.5px;letter-spacing:-0.07px;">Blur</span>
<span class="t" style="left:1412.0px;top:212.5px;font-size:11px;">0</span>
<span class="t" style="left:1238.3px;top:242.2px;font-size:11.5px;letter-spacing:-0.24px;">Bevel</span>
<span class="t" style="left:1346.8px;top:241.7px;font-size:11px;letter-spacing:0.06px;">None</span>
<span class="t" style="left:1238.3px;top:288.2px;font-size:15px;font-weight:700;color:#1b2c5b;letter-spacing:0.34px;">Camera</span>
<span class="t" style="left:1257.4px;top:316.1px;font-size:11.5px;letter-spacing:0.45px;">Orthographic</span>
<span class="t" style="left:1238.3px;top:342.8px;font-size:11.5px;letter-spacing:0.26px;">Focal Length [mm]</span>
<span class="t" style="left:1412.0px;top:337.6px;font-size:11px;letter-spacing:0.03px;">50</span>
<span class="t" style="left:1238.3px;top:367.3px;font-size:11.5px;letter-spacing:0.01px;">Perspective</span>
<span class="t" style="left:1238.3px;top:397.7px;font-size:15px;font-weight:700;color:#1b2c5b;letter-spacing:0.36px;">Resolution</span>
<span class="t" style="left:1238.3px;top:423.7px;font-size:11.5px;letter-spacing:0.51px;">Width</span>
<span class="t" style="left:1412.6px;top:418.3px;font-size:11px;letter-spacing:-0.37px;">1024</span>
<span class="t" style="left:1238.3px;top:448.4px;font-size:11.5px;letter-spacing:0.41px;">Height</span>
<span class="t" style="left:1412.6px;top:443.0px;font-size:11px;letter-spacing:-0.37px;">1024</span>
<span class="t" style="left:1257.4px;top:475.1px;font-size:11.5px;letter-spacing:0.19px;">Oval design</span>
<span class="t" style="left:1319.2px;top:501.4px;font-size:11.5px;letter-spacing:0.37px;">Tighten Crop</span>
<span class="t" style="left:1347.3px;top:611.6px;font-size:21.3px;font-weight:700;color:#152453;letter-spacing:0.47px;">RELIEF</span>
<span class="t" style="left:1348.0px;top:633.6px;font-size:21.3px;color:#152453;letter-spacing:0.41px;">MAKER</span>
<span class="t" style="left:1279.3px;top:672.9px;font-size:15.4px;color:#2c8ad8;letter-spacing:0.43px;">www.reliefmaker.com</span>
<span class="t" style="left:1236.3px;top:754.1px;font-size:15px;font-weight:700;color:#1b2c5b;letter-spacing:0.30px;">Display</span>
<span class="t" style="left:1261.5px;top:786.4px;font-size:11.5px;letter-spacing:-0.25px;">Scene</span>
<span class="t" style="left:1261.5px;top:817.0px;font-size:11.5px;letter-spacing:0.01px;">Relief Result</span>
<span class="t" style="left:1316.5px;top:862.5px;font-size:12px;font-weight:700;color:#111111;letter-spacing:0.05px;">Generate Relief</span>
<div class="b" style="left:83.6px;top:44.6px;width:6.4px;height:1px;background:#1f1f1f"></div>
<div class="b" style="left:137.6px;top:44.6px;width:7.2px;height:1px;background:#1f1f1f"></div>
<div class="b" style="left:1372.4px;top:874px;width:7.6px;height:1px;background:#111"></div>
</div>
</body></html>
